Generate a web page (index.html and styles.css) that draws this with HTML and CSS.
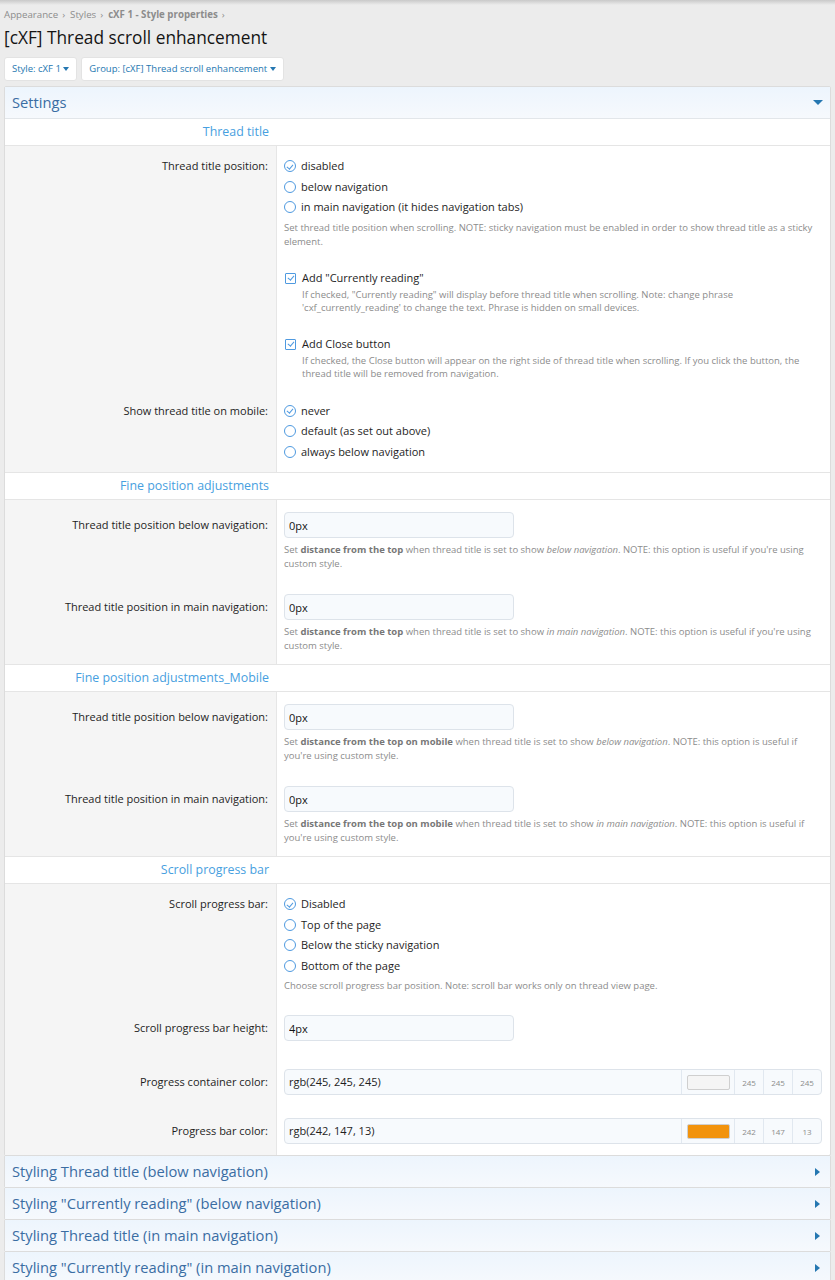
FILE: index.html
```html
<!DOCTYPE html>
<html lang="en">
<head>
  <meta charset="UTF-8" />
  <meta name="viewport" content="width=device-width, initial-scale=1" />
  <title>[cXF] Thread scroll enhancement - Style properties</title>
  <link rel="stylesheet" href="styles.css">
</head>
<body>
  <div class="top-shade"></div>

  <div class="page">
    <ul class="breadcrumbs">
      <li><a href="#">Appearance</a></li>
      <li><a href="#">Styles</a></li>
      <li><a href="#" class="current">cXF 1 - Style properties</a></li>
    </ul>

    <h1 class="page-title">[cXF] Thread scroll enhancement</h1>

    <div class="filter-bar">
      <a href="#" class="menu-btn">Style: cXF 1 <span class="caret"></span></a>
      <a href="#" class="menu-btn">Group: [cXF] Thread scroll enhancement <span class="caret"></span></a>
    </div>

    <div class="block">
      <h2 class="block-header">Settings <span class="toggle is-open"></span></h2>
      <div class="block-body">

        <h3 class="group-title"><span>Thread title</span></h3>

        <dl class="form-row">
          <dt>Thread title position:</dt>
          <dd>
            <ul class="choices">
              <li><span class="radio is-checked"></span>disabled</li>
              <li><span class="radio"></span>below navigation</li>
              <li><span class="radio"></span>in main navigation (it hides navigation tabs)</li>
            </ul>
            <p class="explain">Set thread title position when scrolling. NOTE: sticky navigation must be enabled in order to show thread title as a sticky element.</p>
          </dd>
        </dl>

        <dl class="form-row">
          <dt></dt>
          <dd>
            <div class="check-item">
              <span class="checkbox is-checked"></span>
              <div>
                <div class="check-label">Add "Currently reading"</div>
                <p class="hint">If checked, "Currently reading" will display before thread title when scrolling. Note: change phrase 'cxf_currently_reading' to change the text. Phrase is hidden on small devices.</p>
              </div>
            </div>
          </dd>
        </dl>

        <dl class="form-row">
          <dt></dt>
          <dd>
            <div class="check-item">
              <span class="checkbox is-checked"></span>
              <div>
                <div class="check-label">Add Close button</div>
                <p class="hint">If checked, the Close button will appear on the right side of thread title when scrolling. If you click the button, the thread title will be removed from navigation.</p>
              </div>
            </div>
          </dd>
        </dl>

        <dl class="form-row">
          <dt>Show thread title on mobile:</dt>
          <dd>
            <ul class="choices">
              <li><span class="radio is-checked"></span>never</li>
              <li><span class="radio"></span>default (as set out above)</li>
              <li><span class="radio"></span>always below navigation</li>
            </ul>
          </dd>
        </dl>

        <h3 class="group-title"><span>Fine position adjustments</span></h3>

        <dl class="form-row input-row">
          <dt>Thread title position below navigation:</dt>
          <dd>
            <input type="text" class="input" value="0px">
            <p class="explain">Set <b>distance from the top</b> when thread title is set to show <i>below navigation</i>. NOTE: this option is useful if you're using custom style.</p>
          </dd>
        </dl>

        <dl class="form-row input-row">
          <dt>Thread title position in main navigation:</dt>
          <dd>
            <input type="text" class="input" value="0px">
            <p class="explain">Set <b>distance from the top</b> when thread title is set to show <i>in main navigation</i>. NOTE: this option is useful if you're using custom style.</p>
          </dd>
        </dl>

        <h3 class="group-title"><span>Fine position adjustments_Mobile</span></h3>

        <dl class="form-row input-row">
          <dt>Thread title position below navigation:</dt>
          <dd>
            <input type="text" class="input" value="0px">
            <p class="explain">Set <b>distance from the top on mobile</b> when thread title is set to show <i>below navigation</i>. NOTE: this option is useful if you're using custom style.</p>
          </dd>
        </dl>

        <dl class="form-row input-row">
          <dt>Thread title position in main navigation:</dt>
          <dd>
            <input type="text" class="input" value="0px">
            <p class="explain">Set <b>distance from the top on mobile</b> when thread title is set to show <i>in main navigation</i>. NOTE: this option is useful if you're using custom style.</p>
          </dd>
        </dl>

        <h3 class="group-title"><span>Scroll progress bar</span></h3>

        <dl class="form-row">
          <dt>Scroll progress bar:</dt>
          <dd>
            <ul class="choices">
              <li><span class="radio is-checked"></span>Disabled</li>
              <li><span class="radio"></span>Top of the page</li>
              <li><span class="radio"></span>Below the sticky navigation</li>
              <li><span class="radio"></span>Bottom of the page</li>
            </ul>
            <p class="explain">Choose scroll progress bar position. Note: scroll bar works only on thread view page.</p>
          </dd>
        </dl>

        <dl class="form-row input-row">
          <dt>Scroll progress bar height:</dt>
          <dd>
            <input type="text" class="input" value="4px">
          </dd>
        </dl>

        <dl class="form-row input-row">
          <dt>Progress container color:</dt>
          <dd>
            <div class="color-input">
              <span class="color-text">rgb(245, 245, 245)</span>
              <span class="color-swatch"><span class="swatch" style="background: rgb(245, 245, 245)"></span></span>
              <span class="color-part">245</span>
              <span class="color-part">245</span>
              <span class="color-part">245</span>
            </div>
          </dd>
        </dl>

        <dl class="form-row input-row">
          <dt>Progress bar color:</dt>
          <dd>
            <div class="color-input">
              <span class="color-text">rgb(242, 147, 13)</span>
              <span class="color-swatch"><span class="swatch" style="background: rgb(242, 147, 13)"></span></span>
              <span class="color-part">242</span>
              <span class="color-part">147</span>
              <span class="color-part">13</span>
            </div>
          </dd>
        </dl>

      </div>
    </div>

    <div class="block">
      <h2 class="block-header">Styling Thread title (below navigation) <span class="toggle"></span></h2>
    </div>
    <div class="block">
      <h2 class="block-header">Styling "Currently reading" (below navigation) <span class="toggle"></span></h2>
    </div>
    <div class="block">
      <h2 class="block-header">Styling Thread title (in main navigation) <span class="toggle"></span></h2>
    </div>
    <div class="block">
      <h2 class="block-header">Styling "Currently reading" (in main navigation) <span class="toggle"></span></h2>
    </div>
  </div>

</body>
</html>
```

FILE: styles.css
```css
body {
  font-family: 'Open Sans', sans-serif;
  font-size: 11px;
  background: #ececec;
  color: #1e1e1e;
  margin: 0;
}
.top-shade {
  height: 5px;
  background: linear-gradient(#c9c9c9, #ececec);
}
.page {
  padding: 0 4px;
}
.breadcrumbs {
  list-style: none;
  margin: 0;
  padding: 3px 0 0;
  display: flex;
  font-size: 9.7px;
  line-height: 13px;
}
.breadcrumbs li::after {
  content: "\203A";
  color: #8c8c8c;
  margin: 0 5px 0 4px;
}
.breadcrumbs a {
  color: #8c8c8c;
  text-decoration: none;
}
.breadcrumbs a.current {
  font-weight: bold;
}
.page-title {
  font-size: 17.3px;
  font-weight: normal;
  color: #141414;
  margin: 4px 0 6px;
  line-height: 26px;
}
.filter-bar {
  display: flex;
  gap: 4px;
  margin-bottom: 5px;
}
.menu-btn {
  background: white;
  color: #2577b1;
  font-size: 9.5px;
  text-decoration: none;
  padding: 0 7px;
  line-height: 22px;
  border-radius: 3px;
  border: 1px solid #e3e3e3;
}
.caret {
  display: inline-block;
  border-left: 3.5px solid transparent;
  border-right: 3.5px solid transparent;
  border-top: 4px solid #2577b1;
  vertical-align: 1px;
}
.block {
  border: 1px solid #dcdcdc;
  border-radius: 2px;
  background: white;
}
.block + .block {
  margin-top: -1px;
}
.block-header {
  margin: 0;
  font-size: 14.7px;
  font-weight: normal;
  color: #3a6da3;
  background: linear-gradient(#edf5fd, #f6f9fd);
  height: 31px;
  line-height: 31px;
  padding: 0 7px;
  display: flex;
  justify-content: space-between;
  align-items: center;
}
.block-body {
  border-top: 1px solid #e2e6ea;
}
.toggle {
  border-top: 4px solid transparent;
  border-bottom: 4px solid transparent;
  border-left: 5px solid #2577b1;
  margin-right: 3px;
}
.toggle.is-open {
  border-left: 5px solid transparent;
  border-right: 5px solid transparent;
  border-top: 5px solid #2577b1;
  border-bottom: 0;
  margin-right: 0;
}
.group-title {
  margin: 0;
  font-size: 12.4px;
  font-weight: normal;
  color: #47a0e0;
  line-height: 26px;
  border-bottom: 1px solid #e5e5e5;
  display: grid;
  grid-template-columns: 272px 1fr;
}
.group-title span {
  text-align: right;
  padding-right: 8px;
}
.form-row + .group-title {
  border-top: 1px solid #e5e5e5;
}
.form-row {
  display: grid;
  grid-template-columns: 272px 1fr;
  margin: 0;
}
.form-row dt {
  background: #f5f5f5;
  border-right: 1px solid #e6e6e6;
  text-align: right;
  padding: 10px 8px 10px 0;
  line-height: 20px;
}
.form-row dd {
  margin: 0;
  padding: 10px 8px 10px 7px;
}
.input-row dt {
  padding-top: 12px;
  line-height: 26px;
}
.input-row dd {
  padding-top: 12px;
  padding-bottom: 11px;
}
.choices {
  list-style: none;
  margin: 0;
  padding: 0;
}
.choices li {
  line-height: 20.5px;
  display: flex;
  align-items: center;
}
.radio {
  width: 10px;
  height: 10px;
  border: 1px solid #4f9ae0;
  border-radius: 50%;
  margin: 0 5px 0 0;
  flex: none;
  position: relative;
}
.radio.is-checked::after,
.checkbox.is-checked::after {
  content: "";
  position: absolute;
  left: 3px;
  top: 1.5px;
  width: 2.5px;
  height: 5px;
  border-right: 1px solid #4f9ae0;
  border-bottom: 1px solid #4f9ae0;
  transform: rotate(40deg);
}
.checkbox {
  width: 9px;
  height: 9px;
  border: 1px solid #4f9ae0;
  border-radius: 1px;
  flex: none;
  position: relative;
  margin: 4px 6px 0 1px;
}
.checkbox.is-checked::after {
  left: 2.5px;
  top: 0.5px;
}
.check-item {
  display: flex;
  align-items: flex-start;
}
.check-label {
  line-height: 18px;
}
.explain,
.hint {
  margin: 3px 0 0;
  font-size: 9.5px;
  line-height: 14px;
  color: #8c8c8c;
}
.hint {
  margin: 1px 0 0;
  line-height: 13.5px;
}
.explain b {
  color: #777;
}
.input {
  display: block;
  width: 230px;
  height: 26px;
  box-sizing: border-box;
  border: 1px solid #dde3ea;
  border-radius: 4px;
  background: #f7fafd;
  font-family: inherit;
  font-size: 11px;
  color: #141414;
  padding: 0 4px;
  margin: 0 0 5px;
}
.color-input {
  display: flex;
  height: 26px;
  box-sizing: border-box;
  border: 1px solid #dde3ea;
  border-radius: 4px;
  background: #f7fafd;
  overflow: hidden;
}
.color-text {
  flex: 1;
  line-height: 24px;
  padding-left: 4px;
}
.color-swatch,
.color-part {
  border-left: 1px solid #e1e8f0;
  display: flex;
  align-items: center;
  justify-content: center;
}
.color-swatch {
  width: 52px;
}
.swatch {
  width: 41px;
  height: 13px;
  border: 1px solid #cfcfcf;
  border-radius: 2px;
}
.color-part {
  width: 28px;
  font-size: 8px;
  color: #8c8c8c;
}
```
